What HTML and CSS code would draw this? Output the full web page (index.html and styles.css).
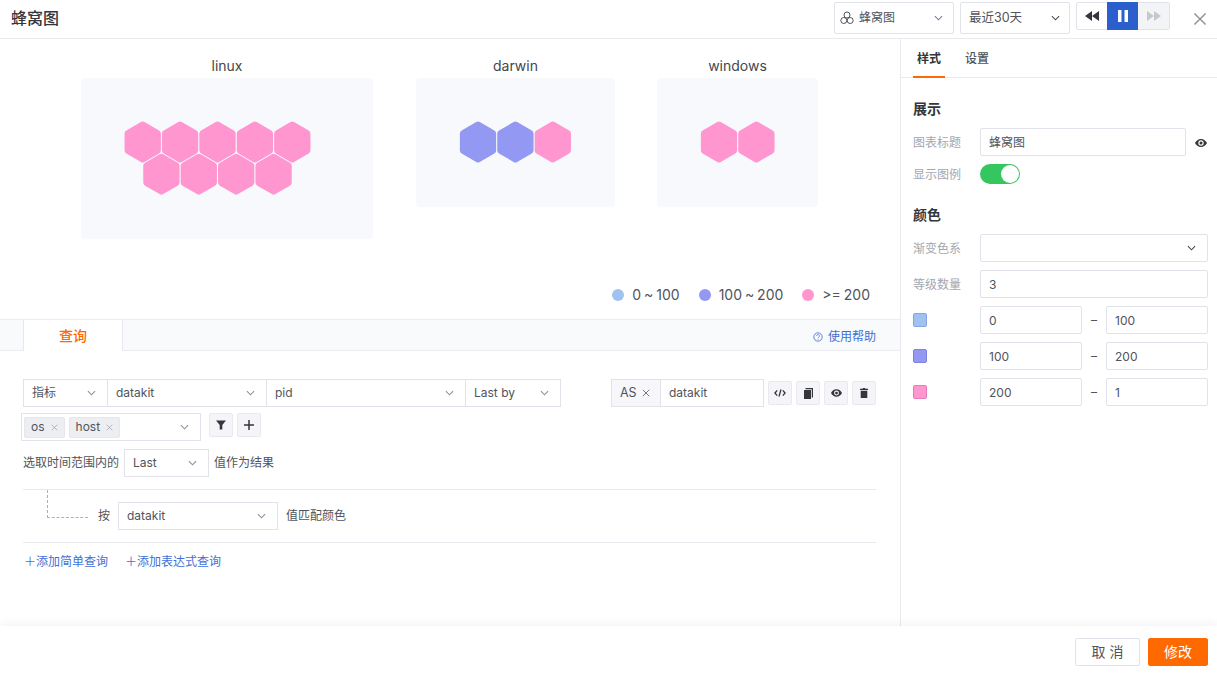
FILE: index.html
```html
<!DOCTYPE html>
<html lang="zh">
<head>
<meta charset="utf-8">
<title>蜂窝图</title>
<link rel="stylesheet" href="styles.css">
</head>
<body>
<svg class="defs" width="0" height="0" aria-hidden="true">
  <symbol id="chev" viewBox="0 0 10 6"><path d="M1 1l4 4 4-4" fill="none" stroke="currentColor" stroke-width="1.2"/></symbol>
  <symbol id="x" viewBox="0 0 10 10"><path d="M1 1l8 8M9 1l-8 8" fill="none" stroke="currentColor" stroke-width="1"/></symbol>
  <symbol id="eye" viewBox="0 0 12 8"><path fill="currentColor" fill-rule="evenodd" d="M6 0c2.7 0 4.9 1.7 6 4-1.1 2.300-3.300 4-6 4S1.100 6.300 0 4c1.100-2.300 3.300-4 6-4zm0 1.300a2.700 2.700 0 1 0 0 5.400 2.700 2.700 0 0 0 0-5.400zM6 2.500a1.500 1.500 0 1 1 0 3 1.500 1.500 0 0 1 0-3z"/></symbol>
  <polygon id="hex" points="0,-16.800 14.550,-8.400 14.550,8.400 0,16.800 -14.550,8.400 -14.550,-8.400"/>
</svg>

<header class="topbar">
  <h1 class="title">蜂窝图</h1>
  <div class="topbar-tools">
    <div class="sel sel-type">
      <span class="sel-label">
        <svg class="icon-comb" viewBox="0 0 14 14"><g fill="none" stroke="currentColor" stroke-width="1"><circle cx="7" cy="4" r="3"/><circle cx="3.800" cy="9.500" r="3"/><circle cx="10.200" cy="9.500" r="3"/></g></svg>
        蜂窝图
      </span>
      <svg class="chev chev-blue"><use href="#chev"/></svg>
    </div>
    <div class="sel sel-range"><span>最近30天</span><svg class="chev chev-dark"><use href="#chev"/></svg></div>
    <div class="player">
      <span class="pl-btn pl-first"><svg viewBox="0 0 14 10" class="pl-icon"><path fill="currentColor" d="M7 0v10L0 5zM14 0v10L7 5z"/></svg></span>
      <span class="pl-btn pl-on"><svg viewBox="0 0 10 12" class="pl-pause"><path fill="currentColor" d="M0 0h3.500v12H0zM6.500 0H10v12H6.500z"/></svg></span>
      <span class="pl-btn pl-off"><svg viewBox="0 0 14 10" class="pl-icon"><path fill="currentColor" d="M0 0v10l7-5zM7 0v10l7-5z"/></svg></span>
    </div>
    <svg class="close"><use href="#x"/></svg>
  </div>
</header>

<div class="workspace">
  <main class="left">
    <section class="preview">
      <div class="charts">
        <figure class="chart chart-first">
          <figcaption>linux</figcaption>
          <svg class="card card-linux" viewBox="0 0 292 161">
            <g class="hex-pink">
              <use href="#hex" x="61.700" y="64"/><use href="#hex" x="99.100" y="64"/><use href="#hex" x="136.500" y="64"/><use href="#hex" x="173.900" y="64"/><use href="#hex" x="211.300" y="64"/>
              <use href="#hex" x="80.400" y="96.200"/><use href="#hex" x="117.800" y="96.200"/><use href="#hex" x="155.200" y="96.200"/><use href="#hex" x="192.600" y="96.200"/>
            </g>
          </svg>
        </figure>
        <figure class="chart">
          <figcaption>darwin</figcaption>
          <svg class="card card-darwin" viewBox="0 0 199 129">
            <g class="hex-violet"><use href="#hex" x="62" y="64"/><use href="#hex" x="99.400" y="64"/></g>
            <g class="hex-pink"><use href="#hex" x="136.800" y="64"/></g>
          </svg>
        </figure>
        <figure class="chart">
          <figcaption>windows</figcaption>
          <svg class="card card-windows" viewBox="0 0 161 129">
            <g class="hex-pink"><use href="#hex" x="62" y="64"/><use href="#hex" x="99.400" y="64"/></g>
          </svg>
        </figure>
      </div>
      <ul class="legend">
        <li><i class="dot c-blue"></i>0 ~ 100</li>
        <li><i class="dot c-violet"></i>100 ~ 200</li>
        <li><i class="dot c-pink"></i>&gt;= 200</li>
      </ul>
    </section>

    <section class="query">
      <div class="qtabs">
        <span class="qtab">查询</span>
        <a class="help">
          <svg class="help-icon" viewBox="0 0 12 12"><circle cx="6" cy="6" r="5" fill="none" stroke="currentColor"/><path d="M4.300 4.800a1.700 1.700 0 1 1 2.600 1.400c-.6.4-.9.700-.9 1.300M6 8.300v1" fill="none" stroke="currentColor" stroke-width=".9"/></svg>
          使用帮助
        </a>
      </div>
      <div class="qbody">
        <div class="row row-main">
          <div class="joined">
            <div class="sel w-84"><span>指标</span><svg class="chev"><use href="#chev"/></svg></div>
            <div class="sel w-160"><span>datakit</span><svg class="chev"><use href="#chev"/></svg></div>
            <div class="sel w-200"><span>pid</span><svg class="chev"><use href="#chev"/></svg></div>
            <div class="sel w-96"><span>Last by</span><svg class="chev"><use href="#chev"/></svg></div>
          </div>
          <div class="alias">
            <span class="as">AS <svg class="as-x"><use href="#x"/></svg></span>
            <span class="alias-input">datakit</span>
          </div>
          <div class="actions">
            <span class="ibtn"><svg class="i-code" viewBox="0 0 12 8"><path d="M3.200 1.300L.9 4l2.300 2.700M8.800 1.300L11.100 4 8.800 6.700M7 .5L5 7.500" fill="none" stroke="currentColor" stroke-width="1.300"/></svg></span>
            <span class="ibtn"><svg class="i-copy" viewBox="0 0 9 11"><path fill="currentColor" d="M0 2h7v9H0z"/><path fill="currentColor" d="M1.500 0H9v9.500H7.800V1.200H1.500z"/></svg></span>
            <span class="ibtn"><svg class="i-eye"><use href="#eye"/></svg></span>
            <span class="ibtn"><svg class="i-trash" viewBox="0 0 8 10"><path fill="currentColor" d="M3 0h2l.4.8H8V2H0V.8h2.600zM.7 2.800h6.600V10H.7z"/></svg></span>
          </div>
        </div>
        <div class="row row-tags">
          <div class="sel multi">
            <span class="tags">
              <span class="tag">os <svg class="tag-x"><use href="#x"/></svg></span>
              <span class="tag">host <svg class="tag-x"><use href="#x"/></svg></span>
            </span>
            <svg class="chev"><use href="#chev"/></svg>
          </div>
          <span class="ibtn ibtn-top"><svg class="i-filter" viewBox="0 0 10 10"><path fill="currentColor" d="M0 .5h10L6.300 5v4.500H3.700V5z"/></svg></span>
          <span class="ibtn ibtn-top"><svg class="i-plus" viewBox="0 0 10 10"><path d="M5 0v10M0 5h10" stroke="currentColor" stroke-width="1.500"/></svg></span>
        </div>
        <div class="row row-range">
          <span>选取时间范围内的</span>
          <div class="sel w-85"><span>Last</span><svg class="chev"><use href="#chev"/></svg></div>
          <span>值作为结果</span>
        </div>
        <div class="group">
          <span class="connector"></span>
          <span>按</span>
          <div class="sel w-160b"><span>datakit</span><svg class="chev"><use href="#chev"/></svg></div>
          <span>值匹配颜色</span>
        </div>
        <div class="links">
          <a>＋添加简单查询</a>
          <a>＋添加表达式查询</a>
        </div>
      </div>
    </section>
  </main>

  <aside class="side">
    <nav class="stabs"><span class="stab stab-on">样式</span><span class="stab">设置</span></nav>
    <div class="sbody">
      <h2 class="shead">展示</h2>
      <div class="form-row">
        <label>图表标题</label>
        <span class="inp inp-title">蜂窝图</span>
        <svg class="s-eye"><use href="#eye"/></svg>
      </div>
      <div class="form-row form-switch">
        <label>显示图例</label>
        <span class="switch"><i></i></span>
      </div>
      <h2 class="shead shead-color">颜色</h2>
      <div class="grid-rows">
        <div class="form-row">
          <label>渐变色系</label>
          <div class="sel grow"><span></span><svg class="chev chev-dark"><use href="#chev"/></svg></div>
        </div>
        <div class="form-row">
          <label>等级数量</label>
          <span class="inp grow">3</span>
        </div>
        <div class="form-row">
          <label><i class="swatch c-blue b-blue"></i></label>
          <span class="inp num">0</span><span class="dash">–</span><span class="inp num">100</span>
        </div>
        <div class="form-row">
          <label><i class="swatch c-violet b-violet"></i></label>
          <span class="inp num">100</span><span class="dash">–</span><span class="inp num">200</span>
        </div>
        <div class="form-row">
          <label><i class="swatch c-pink b-pink"></i></label>
          <span class="inp num">200</span><span class="dash">–</span><span class="inp num">1</span>
        </div>
      </div>
    </div>
  </aside>
</div>

<footer class="foot">
  <button class="btn btn-cancel">取 消</button>
  <button class="btn btn-ok">修改</button>
</footer>
</body>
</html>
```

FILE: styles.css
```css
* { box-sizing: border-box; }
html, body { margin: 0; padding: 0; }
body {
  width: 1217px;
  height: 676px;
  overflow: hidden;
  background: #fff;
  color: #50545c;
  font: 12px/16px Inter, "Noto Sans CJK SC", sans-serif;
  display: flex;
  flex-direction: column;
}
.defs { position: absolute; }
h1, h2, figure, ul { margin: 0; padding: 0; }
i { font-style: normal; display: block; }
svg { display: block; flex: none; }

.topbar {
  height: 39px;
  flex: none;
  border-bottom: 1px solid #e8e9ee;
  display: flex;
  justify-content: space-between;
  padding: 2px 10px 0 11px;
}
.title { font-size: 16px; line-height: 33px; font-weight: 500; color: #33363c; }
.topbar-tools { display: flex; align-items: flex-start; }

.sel {
  height: 28px;
  border: 1px solid #e2e3ea;
  background: #fff;
  display: flex;
  align-items: center;
  justify-content: space-between;
  padding: 0 11px 0 8px;
  flex: none;
}
.chev { width: 9px; height: 6px; color: #8a8f9c; }
.chev-dark { color: #45484f; }
.chev-blue { color: #6d7f9e; }

.sel-type { width: 120px; height: 32px; border-radius: 2px; padding: 0 10px 0 5px; }
.sel-label { display: flex; align-items: center; gap: 5px; }
.icon-comb { width: 14px; height: 14px; color: #50545c; }
.sel-range { width: 110px; height: 32px; margin-left: 6px; border-radius: 2px; padding: 0 9px 0 8px; font-size: 12.500px; }

.player {
  display: flex;
  margin-left: 6px;
  height: 28px;
  width: 94px;
  border: 1px solid #e2e3ea;
  border-radius: 2px;
}
.pl-btn { flex: none; width: 31px; display: flex; align-items: center; justify-content: center; color: #33363c; }
.pl-first { width: 30px; }
.pl-on { background: #2b5fcd; color: #fff; margin: -1px 0; }
.pl-off { background: #f3f4f6; color: #c5c8cf; }
.pl-icon { width: 14px; height: 10px; }
.pl-pause { width: 10px; height: 12px; }
.close { width: 14px; height: 14px; margin: 10px 0 0 23px; color: #8e9096; }

.workspace { flex: 1; display: flex; min-height: 0; }
.left { width: 900px; flex: none; display: flex; flex-direction: column; }
.preview { height: 280px; flex: none; padding: 19px 30px 0 81px; }
.charts { display: flex; gap: 42px; height: 181px; }
.chart-first { margin-right: 1px; }
.chart figcaption { text-align: center; font-size: 14px; line-height: 16px; color: #44474d; margin-bottom: 4px; }
.card { background: #f8f9fd; border-radius: 4px; }
.card-linux { width: 292px; height: 161px; }
.card-darwin { width: 199px; height: 129px; }
.card-windows { width: 161px; height: 129px; }
.hex-pink { fill: #ff96d0; stroke: #ff96d0; stroke-width: 7.200; stroke-linejoin: round; }
.hex-violet { fill: #9399f2; stroke: #9399f2; stroke-width: 7.200; stroke-linejoin: round; }

.legend {
  list-style: none;
  margin-top: 48px;
  display: flex;
  justify-content: flex-end;
  gap: 19px;
  font-size: 14px;
  line-height: 16px;
  word-spacing: -1px;
  color: #50545c;
}
.legend li { display: flex; align-items: center; gap: 8px; }
.dot { width: 12px; height: 12px; border-radius: 50%; }
.c-blue { background: #a0c2f0; }
.c-violet { background: #9399f2; }
.c-pink { background: #ff96d0; }

.query { flex: 1; display: flex; flex-direction: column; }
.qtabs {
  height: 32px;
  flex: none;
  display: flex;
  justify-content: space-between;
  background: #f9fafc;
  border-top: 1px solid #ecedf1;
  border-bottom: 1px solid #ecedf1;
  padding: 0 24px 0 23px;
}
.qtab {
  width: 100px;
  height: 31px;
  background: #fff;
  border-left: 1px solid #e8e9ee;
  border-right: 1px solid #e8e9ee;
  color: #ff6a00;
  font-size: 14px;
  font-weight: 500;
  line-height: 32px;
  text-align: center;
}
.help { display: flex; align-items: center; gap: 5px; color: #3f6fd6; padding-top: 4px; }
.help-icon { width: 10px; height: 10px; }

.qbody { padding: 28px 24px 0 23px; }
.row { display: flex; align-items: flex-start; }
.row-main { justify-content: space-between; }
.joined { display: flex; }
.joined .sel + .sel { margin-left: -1px; }
.w-84 { width: 85px; }
.w-160 { width: 160px; }
.w-200 { width: 200px; }
.w-96 { width: 96px; }
.alias { display: flex; height: 28px; margin-left: auto; }
.as {
  width: 50px;
  background: #f6f6fb;
  border: 1px solid #e2e3ea;
  display: flex;
  align-items: center;
  gap: 5px;
  padding-left: 8px;
  font-size: 12.500px;
}
.as-x { width: 8px; height: 8px; color: #50545c; }
.alias-input {
  width: 104px;
  margin-left: -1px;
  border: 1px solid #e2e3ea;
  line-height: 26px;
  padding-left: 8px;
}
.actions { display: flex; gap: 4px; margin: 2px 0 0 4px; }
.ibtn {
  width: 24px;
  height: 24px;
  background: #f5f5f9;
  border: 1px solid #e9eaef;
  border-radius: 2px;
  display: flex;
  align-items: center;
  justify-content: center;
  color: #33363c;
}
.i-code { width: 12px; height: 8px; }
.i-copy { width: 9px; height: 11px; }
.i-eye { width: 11px; height: 8px; }
.i-trash { width: 8px; height: 10px; }
.i-filter { width: 10px; height: 10px; }
.i-plus { width: 10px; height: 10px; }

.row-tags { margin: 6px 0 0 -2px; gap: 8px; }
.multi { width: 180px; padding: 0 11px 0 2px; }
.tags { display: flex; gap: 4px; }
.tag {
  height: 21px;
  background: #eceef2;
  border: 1px solid #e6e7ec;
  border-radius: 2px;
  padding: 0 6px;
  display: flex;
  align-items: center;
  gap: 6px;
}
.tag-x { width: 7px; height: 7px; color: #9a9da5; }
.ibtn-top { margin-right: -4px; }

.row-range { margin-top: 8px; align-items: center; gap: 5px; }
.w-85 { width: 85px; }

.group {
  position: relative;
  margin-top: 12px;
  height: 54px;
  border-top: 1px solid #e8e9ee;
  border-bottom: 1px solid #e8e9ee;
  padding-left: 75px;
  display: flex;
  align-items: center;
  gap: 8px;
}
.connector {
  position: absolute;
  left: 24px;
  top: 0;
  width: 41px;
  height: 28px;
  border-left: 1px dashed #aeb0b6;
  border-bottom: 1px dashed #aeb0b6;
}
.w-160b { width: 160px; }

.links { display: flex; gap: 17px; margin: 11px 0 0 1px; color: #3f6fd6; }
.links a { display: block; }

.side { flex: 1; border-left: 1px solid #e8e9ee; display: flex; flex-direction: column; }
.stabs {
  height: 39px;
  flex: none;
  display: flex;
  padding-left: 12px;
  gap: 16px;
  border-bottom: 1px solid #e8e9ee;
}
.stab { width: 32px; text-align: center; line-height: 40px; height: 39px; font-weight: 500; color: #50545c; }
.stab-on { color: #33363c; border-bottom: 2px solid #ff6a00; font-weight: 600; }
.sbody { padding: 23px 9px 0 12px; }
.shead { font-size: 14px; line-height: 16px; font-weight: 600; color: #33363c; }
.form-row { display: flex; align-items: center; min-height: 28px; }
.form-row label { width: 67px; flex: none; color: #a3a7b0; margin-top: 2px; }
.shead + .form-row { margin-top: 11px; }
.inp {
  height: 28px;
  border: 1px solid #e2e3ea;
  border-radius: 2px;
  line-height: 28px;
  padding: 0 8px;
  background: #fff;
  flex: none;
}
.inp-title { width: 206px; }
.s-eye { width: 12px; height: 8px; margin-left: 9px; color: #33363c; position: relative; top: 1px; }
.form-switch { margin-top: 8px; min-height: 20px; }
.switch {
  width: 40px;
  height: 20px;
  border-radius: 10px;
  background: #35c75f;
  display: flex;
  justify-content: flex-end;
  padding: 1px;
}
.switch i { width: 18px; height: 18px; border-radius: 50%; background: #fff; }
.shead-color { margin-top: 23px; }
.grid-rows { margin-top: 11px; display: flex; flex-direction: column; gap: 8px; }
.grow { flex: 1; border-radius: 2px; }
.num { width: 102px; }
.dash { width: 24px; text-align: center; color: #50545c; }
.swatch { width: 14px; height: 14px; border-radius: 2px; border: 1px solid; margin-top: -2px; }
.b-blue { border-color: #85a6dc; }
.b-violet { border-color: #7d83de; }
.b-pink { border-color: #e37db9; }

.foot {
  height: 50px;
  flex: none;
  display: flex;
  justify-content: flex-end;
  gap: 8px;
  padding: 12px 9px 0 0;
  background: #fff;
  box-shadow: 0 -4px 8px rgba(0, 0, 0, .04);
  position: relative;
}
.btn {
  height: 28px;
  border-radius: 2px;
  font: inherit;
  font-size: 14px;
  padding: 0;
}
.btn-cancel { width: 65px; background: #fff; border: 1px solid #e2e3ea; color: #50545c; }
.btn-ok { width: 60px; background: #ff6a00; border: 1px solid #ff6a00; color: #fff; }
```
